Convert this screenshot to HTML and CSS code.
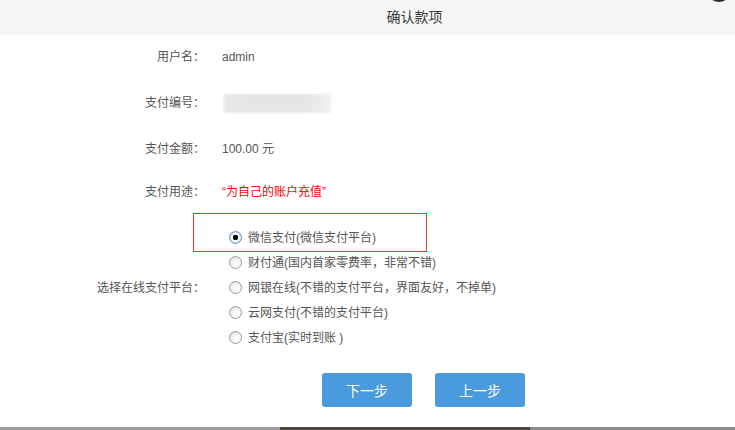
FILE: index.html
```html
<!DOCTYPE html>
<html lang="zh-CN">
<head>
    <meta charset="UTF-8">
    <title>确认款项</title>
    <link rel="stylesheet" href="styles.css">
</head>
<body>
    <div class="dialog">
        <div class="dialog-head">确认款项<span class="close-btn"></span></div>

        <form class="pay-form">
            <div class="row">
                <label class="lbl">用户名：</label>
                <div class="val">admin</div>
            </div>
            <div class="row">
                <label class="lbl">支付编号：</label>
                <div class="val"><span class="masked"></span></div>
            </div>
            <div class="row">
                <label class="lbl">支付金额：</label>
                <div class="val">100.00 元</div>
            </div>
            <div class="row">
                <label class="lbl">支付用途：</label>
                <div class="val red">“为自己的账户充值”</div>
            </div>
            <div class="row row-platform">
                <label class="lbl">选择在线支付平台：</label>
                <div class="platforms">
                    <span class="mark-box"></span>
                    <label class="opt"><input type="radio" name="pf" checked>微信支付(微信支付平台)</label>
                    <label class="opt"><input type="radio" name="pf">财付通(国内首家零费率，非常不错)</label>
                    <label class="opt"><input type="radio" name="pf">网银在线(不错的支付平台，界面友好，不掉单)</label>
                    <label class="opt"><input type="radio" name="pf">云网支付(不错的支付平台)</label>
                    <label class="opt"><input type="radio" name="pf">支付宝(实时到账 )</label>
                </div>
            </div>
            <div class="actions">
                <button type="button" class="btn">下一步</button>
                <button type="button" class="btn">上一步</button>
            </div>
        </form>
    </div>

    <div class="taskbar">
        <span class="seg seg-l"></span><span class="seg seg-m"></span><span class="seg seg-r"></span>
    </div>
</body>
</html>
```

FILE: styles.css
```css
html,body{height:100%}
body{margin:0;display:flex;flex-direction:column;overflow:hidden;background:#fff;font-family:"Liberation Sans","Noto Sans CJK SC",sans-serif;font-size:12px;color:#555}

.dialog{position:relative;flex:1}
.dialog-head{
    height:35px;
    line-height:35px;
    background:#f6f6f6;
    text-align:center;
    padding-left:94px;
    font-size:14px;
    color:#3a3a3a;
}
.close-btn{position:absolute;top:-22px;left:707px;width:24px;height:24px;border-radius:50%;background:#2f2f2f}

.pay-form{padding-top:12px}
.row{display:grid;grid-template-columns:205px 1fr;column-gap:17px;line-height:20px;margin-top:26px}
.row:first-child{margin-top:0}
.row:nth-child(4){margin-top:23px}
.lbl{text-align:right}
.val.red{color:#f00}
.masked{display:inline-block;vertical-align:middle;width:108px;height:19px;margin-left:1px;background:linear-gradient(90deg,#f1f1f1 0,#e6e6e6 4%,#e5e5e5 74%,#f0f0f0 100%);filter:blur(1px)}

.row-platform{align-items:center;margin-top:23px}
.platforms{position:relative;display:flex;flex-direction:column;padding-left:7px}
.opt{display:flex;align-items:center;height:25px;cursor:pointer}
.opt input{
    appearance:none;
    -webkit-appearance:none;
    width:13px;height:13px;margin:0 6px 0 0;
    border:1px solid #9c9c9c;border-radius:50%;
    background:radial-gradient(circle at 60% 65%,#fff 0,#f4f4f4 45%,#d6d6d6 100%);
    box-sizing:border-box;
}
.opt input:checked{border-color:#6d8fb8;background:radial-gradient(circle,#000 0,#000 2.5px,#fff 3px,#dfe9f5 5px,#c7d6ea 100%)}
.mark-box{position:absolute;top:-12px;left:-29px;width:234px;height:39px;border:1px solid #e53935;box-sizing:border-box;pointer-events:none}

.actions{display:flex;gap:23px;margin:23px 0 0 322px}
.btn{width:90px;height:34px;border:none;border-radius:3px;background:#4a9ade;color:#fff;font-family:inherit;font-size:14px;cursor:pointer}

.taskbar{display:flex;height:3px}
.seg-l{width:280px;background:#9b9b9b}
.seg-m{width:250px;background:#4d443b}
.seg-r{flex:1;background:#8c8c8c}
```
